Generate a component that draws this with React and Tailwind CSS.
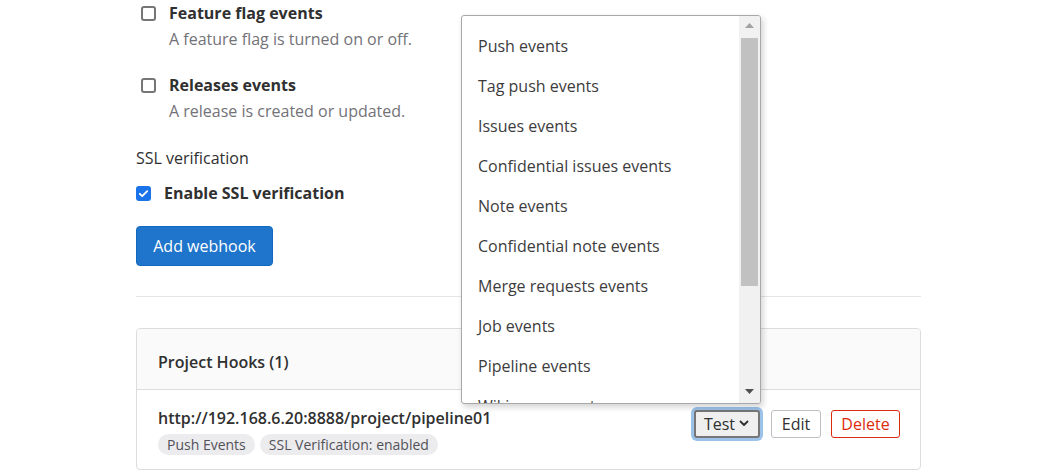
import React from 'react'

const events = [
    'Push events',
    'Tag push events',
    'Issues events',
    'Confidential issues events',
    'Note events',
    'Confidential note events',
    'Merge requests events',
    'Job events',
    'Pipeline events',
    'Wiki page events',
]

const CheckItem = ({ title, desc }) => (
    <div className='flex items-start'>
        <div className='w-[15px] h-[15px] mt-[5px] ml-[5px] rounded-[3px] border-2 border-[#767676] bg-white shrink-0'></div>
        <div className='ml-[13px]'>
            <div className='text-[16px] leading-[24px] font-bold text-[#303030]'>{title}</div>
            <div className='text-[16px] leading-[24px] mt-[2px] text-[#737278]'>{desc}</div>
        </div>
    </div>
)

const App = () => {
    return (
        <div className="relative w-[1055px] h-[474px] overflow-hidden bg-white font-['Segoe_UI','Open_Sans',sans-serif] text-[#303030]">
            <div className='ml-[136px] w-[785px] pt-[1px]'>
                <CheckItem title='Feature flag events' desc='A feature flag is turned on or off.' />
                <div className='mt-[22px]'>
                    <CheckItem title='Releases events' desc='A release is created or updated.' />
                </div>

                <div className='mt-[23px] text-[16px] leading-[24px]'>SSL verification</div>
                <div className='mt-[11px] flex items-center h-[24px]'>
                    <div className='w-[15px] h-[15px] rounded-[3px] bg-[#1a73e8] flex items-center justify-center'>
                        <svg width="11" height="11" viewBox="0 0 12 12" fill="none">
                            <path d="M2 6.3l2.6 2.6L10 3.4" stroke="white" strokeWidth="2" strokeLinecap="round" strokeLinejoin="round" />
                        </svg>
                    </div>
                    <span className='ml-[13px] text-[16px] font-bold'>Enable SSL verification</span>
                </div>

                <button className='mt-[21px] h-[40px] w-[137px] rounded-[4px] bg-[#1f75cb] border border-[#1068bf] text-white text-[16px]'>
                    Add webhook
                </button>

                <div className='mt-[30px] h-px bg-[#e5e5e5]'></div>

                <div className='mt-[31px] border border-[#dcdcde] rounded-[4px] overflow-hidden'>
                    <div className='h-[61px] bg-[#fafafa] border-b border-[#dcdcde] flex items-center pt-[5px] px-[21px]'>
                        <span className='text-[16px] font-semibold'>Project Hooks (1)</span>
                    </div>
                    <div className='h-[79px] flex items-center justify-between pl-[21px] pr-[20px]'>
                        <div className='mt-[2px]'>
                            <div className='text-[16px] leading-[22px] font-semibold'>http://192.168.6.20:8888/project/pipeline01</div>
                            <div className='flex gap-[5px] mt-[5px]'>
                                <span className='px-[9px] h-[21px] leading-[21px] rounded-full bg-[#ececef] text-[#535158] text-[14px]'>Push Events</span>
                                <span className='px-[9px] h-[21px] leading-[21px] rounded-full bg-[#ececef] text-[#535158] text-[14px]'>SSL Verification: enabled</span>
                            </div>
                        </div>
                        <div className='flex items-center -mt-[12px]'>
                            <div className='rounded-[6px] p-[3px] bg-[#9cc2ea]'>
                                <button className='h-[28px] pl-[8px] pr-[9px] flex items-center gap-[4px] rounded-[3px] bg-[#efefef] border-2 border-[#767676] text-[16px] text-[#303030]'>
                                    Test
                                    <svg width="10" height="7" viewBox="0 0 10 7" fill="none">
                                        <path d="M1.5 1.5L5 5l3.5-3.5" stroke="#303030" strokeWidth="1.8" strokeLinecap="round" strokeLinejoin="round" />
                                    </svg>
                                </button>
                            </div>
                            <button className='ml-[8px] h-[28px] w-[50px] rounded-[3px] bg-white border border-[#bfbfc3] text-[16px] text-[#303030]'>Edit</button>
                            <button className='ml-[10px] h-[28px] w-[69px] rounded-[3px] bg-white border border-[#dd2b0e] text-[16px] text-[#dd2b0e]'>Delete</button>
                        </div>
                    </div>
                </div>
            </div>

            {/* native select popup for Test */}
            <div className='absolute left-[461px] top-[15px] w-[300px] h-[389px] bg-white border border-[#a8a8a8] rounded-[3px] shadow-[2px_3px_6px_rgba(0,0,0,0.18)] overflow-hidden'>
                <div className='pt-[10px] pl-[16px] pr-[24px]'>
                    {events.map((e) => (
                        <div key={e} className='h-[40px] flex items-center text-[16px] text-[#3c3c3c]'>{e}</div>
                    ))}
                </div>
                <div className='absolute right-0 top-0 bottom-0 w-[21px] bg-[#f1f1f1] flex flex-col items-center'>
                    <svg className='mt-[7px]' width="9" height="5" viewBox="0 0 9 5"><path d="M0 5L4.5 0L9 5z" fill="#a3a3a3" /></svg>
                    <div className='mt-[10px] w-[17px] h-[248px] bg-[#c1c1c1]'></div>
                    <div className='flex-1'></div>
                    <svg className='mb-[9px]' width="9" height="5" viewBox="0 0 9 5"><path d="M0 0L9 0L4.5 5z" fill="#505050" /></svg>
                </div>
            </div>
        </div>
    )
}

export default App
